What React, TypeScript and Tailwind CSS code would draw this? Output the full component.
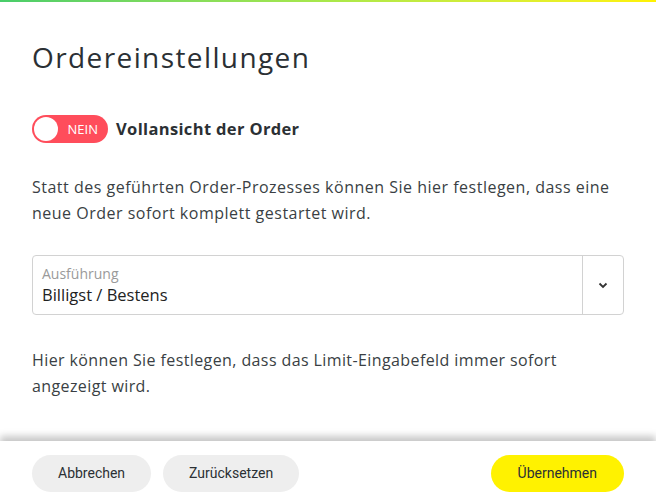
import { useState } from "react";

export default function App() {
  const [vollansicht, setVollansicht] = useState(false);

  return (
    <div className="flex h-[503px] w-[656px] flex-col overflow-hidden bg-white font-['Open_Sans',sans-serif] text-[#2b2f33]">
      <div className="h-[2px] w-full bg-gradient-to-r from-[#48cd6a] via-[#a9e84a] to-[#fff200]" />

      <div className="flex-1 px-8">
        <h1 className="pt-[35px] text-[28px] leading-[40px] font-normal tracking-[1.4px] text-[#2b3034]">
          Ordereinstellungen
        </h1>

        <div className="mt-[38px] flex items-center gap-2">
          <button
            onClick={() => setVollansicht(!vollansicht)}
            className="flex h-[28px] w-[76px] items-center rounded-full bg-[#ff4d5b] pl-[2px] pr-[10px]"
          >
            <span className="h-[24px] w-[24px] rounded-full bg-white" />
            <span className="ml-auto text-[13px] leading-none font-normal text-white">NEIN</span>
          </button>
          <span className="text-[16.5px] font-bold tracking-[0.35px] text-[#2b3034]">
            Vollansicht der Order
          </span>
        </div>

        <p className="mt-[31px] text-[16px] leading-[26px] tracking-[0.5px] text-[#3a3f44]">
          Statt des geführten Order-Prozesses können Sie hier festlegen, dass eine neue Order sofort
          komplett gestartet wird.
        </p>

        <div className="mt-[29px] flex h-[60px] rounded-[4px] border border-[#d2d2d2]">
          <div className="flex flex-1 flex-col justify-center pl-[9px]">
            <span className="text-[14px] leading-[19px] text-[#9a9a9a]">Ausführung</span>
            <span className="text-[16.5px] leading-[24px] text-[#222]">Billigst / Bestens</span>
          </div>
          <div className="flex w-[41px] items-center justify-center border-l border-[#d2d2d2]">
            <svg width="10" height="7" viewBox="0 0 10 7" fill="none">
              <path d="M1.5 1.5 5 5l3.5-3.5" stroke="#333" strokeWidth="1.8" />
            </svg>
          </div>
        </div>

        <p className="mt-[32px] text-[16px] leading-[26px] tracking-[0.4px] text-[#3a3f44]">
          Hier können Sie festlegen, dass das Limit-Eingabefeld immer sofort angezeigt wird.
        </p>
      </div>

      <div className="flex h-[62px] items-center gap-3 px-8 pt-[3px] shadow-[0_-5px_7px_rgba(0,0,0,0.22)]">
        <button className="h-[37px] rounded-full bg-[#eeeeee] px-[26px] font-['Roboto',sans-serif] text-[14px] text-[#2b3034]">
          Abbrechen
        </button>
        <button className="h-[37px] rounded-full bg-[#eeeeee] px-[26px] font-['Roboto',sans-serif] text-[14px] text-[#2b3034]">
          Zurücksetzen
        </button>
        <button className="ml-auto h-[37px] rounded-full bg-[#fff200] px-[27px] font-['Roboto',sans-serif] text-[14px] text-[#2b3034]">
          Übernehmen
        </button>
      </div>
    </div>
  );
}
